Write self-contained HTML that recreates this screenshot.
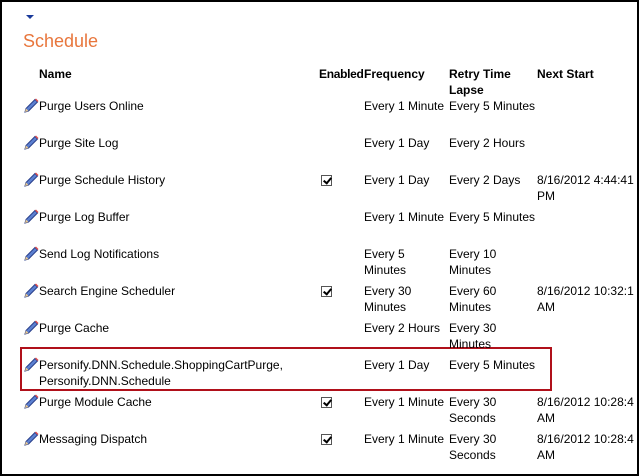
<!DOCTYPE html>
<html><head><meta charset="utf-8"><style>
*{margin:0;padding:0}
body{width:639px;height:476px;overflow:hidden;background:#fff;font-family:"Liberation Sans",Arial,sans-serif;font-size:12px;color:#000}
#f{position:absolute;left:0;top:0;width:635px;height:472px;border:2px solid #000;overflow:hidden}
.t{position:absolute;white-space:nowrap;line-height:16px}
.b{font-weight:bold}
.cb{position:absolute;width:11px;height:11px;border:1px solid #555;background:#fff;box-sizing:border-box}
.cb:after{content:"";position:absolute;left:3px;top:0px;width:3px;height:6px;border:solid #000;border-width:0 2px 2px 0;transform:rotate(40deg)}
svg.p{position:absolute}
</style></head><body><div id="f"></div>
<div style="position:absolute;left:26px;top:15px;width:0;height:0;border-left:4px solid transparent;border-right:4px solid transparent;border-top:4px solid #1a3a9a"></div>
<div class="t" style="left:23px;top:30px;font-size:18px;line-height:22px;color:#e8763c">Schedule</div>
<div class="t b" style="left:39px;top:66px">Name</div>
<div class="t b" style="left:319px;top:66px;letter-spacing:-0.3px">Enabled</div>
<div class="t b" style="left:364px;top:66px">Frequency</div>
<div class="t b" style="left:449px;top:66px">Retry Time<br>Lapse</div>
<div class="t b" style="left:537px;top:66px">Next Start</div>
<div style="position:absolute;left:20px;top:347px;width:528px;height:40px;border:2px solid #b0101a"></div>
<div id="rows"></div>
<script>
var R=[["Purge Users Online",0,"Every 1 Minute","Every 5 Minutes",""],
["Purge Site Log",0,"Every 1 Day","Every 2 Hours",""],
["Purge Schedule History",1,"Every 1 Day","Every 2 Days","8/16/2012 4:44:41<br>PM"],
["Purge Log Buffer",0,"Every 1 Minute","Every 5 Minutes",""],
["Send Log Notifications",0,"Every 5<br>Minutes","Every 10<br>Minutes",""],
["Search Engine Scheduler",1,"Every 30<br>Minutes","Every 60<br>Minutes","8/16/2012 10:32:1<br>AM"],
["Purge Cache",0,"Every 2 Hours","Every 30<br>Minutes",""],
["Personify.DNN.Schedule.ShoppingCartPurge,<br>Personify.DNN.Schedule",0,"Every 1 Day","Every 5 Minutes",""],
["Purge Module Cache",1,"Every 1 Minute","Every 30<br>Seconds","8/16/2012 10:28:4<br>AM"],
["Messaging Dispatch",1,"Every 1 Minute","Every 30<br>Seconds","8/16/2012 10:28:4<br>AM"]];
var h="";R.forEach(function(r,i){var y=98+i*37;
h+='<svg class="p" style="left:23px;top:'+y+'px" width="16" height="16" viewBox="0 0 16 16"><path d="M2 14 L3 10.5 L12 1.5 L14.5 4 L5.5 13 Z" fill="#5b7fd0" stroke="#2a3f8a" stroke-width="1"/><path d="M12 1.5 L14.5 4 L15.5 3 L13 0.5Z" fill="#e05050"/><path d="M2 14 L3 10.5 L5.5 13Z" fill="#e8c890"/></svg>';
h+='<div class="t" style="left:39px;top:'+y+'px">'+r[0]+'</div>';
if(r[1])h+='<div class="cb" style="left:321px;top:'+(y+3)+'px"></div>';
h+='<div class="t" style="left:364px;top:'+y+'px">'+r[2]+'</div>';
h+='<div class="t" style="left:449px;top:'+y+'px">'+r[3]+'</div>';
h+='<div class="t" style="left:537px;top:'+y+'px">'+r[4]+'</div>';});
document.getElementById("rows").innerHTML=h;
</script>
<div style="position:absolute;left:637px;top:0;width:2px;height:476px;background:#000"></div>
</body></html>
